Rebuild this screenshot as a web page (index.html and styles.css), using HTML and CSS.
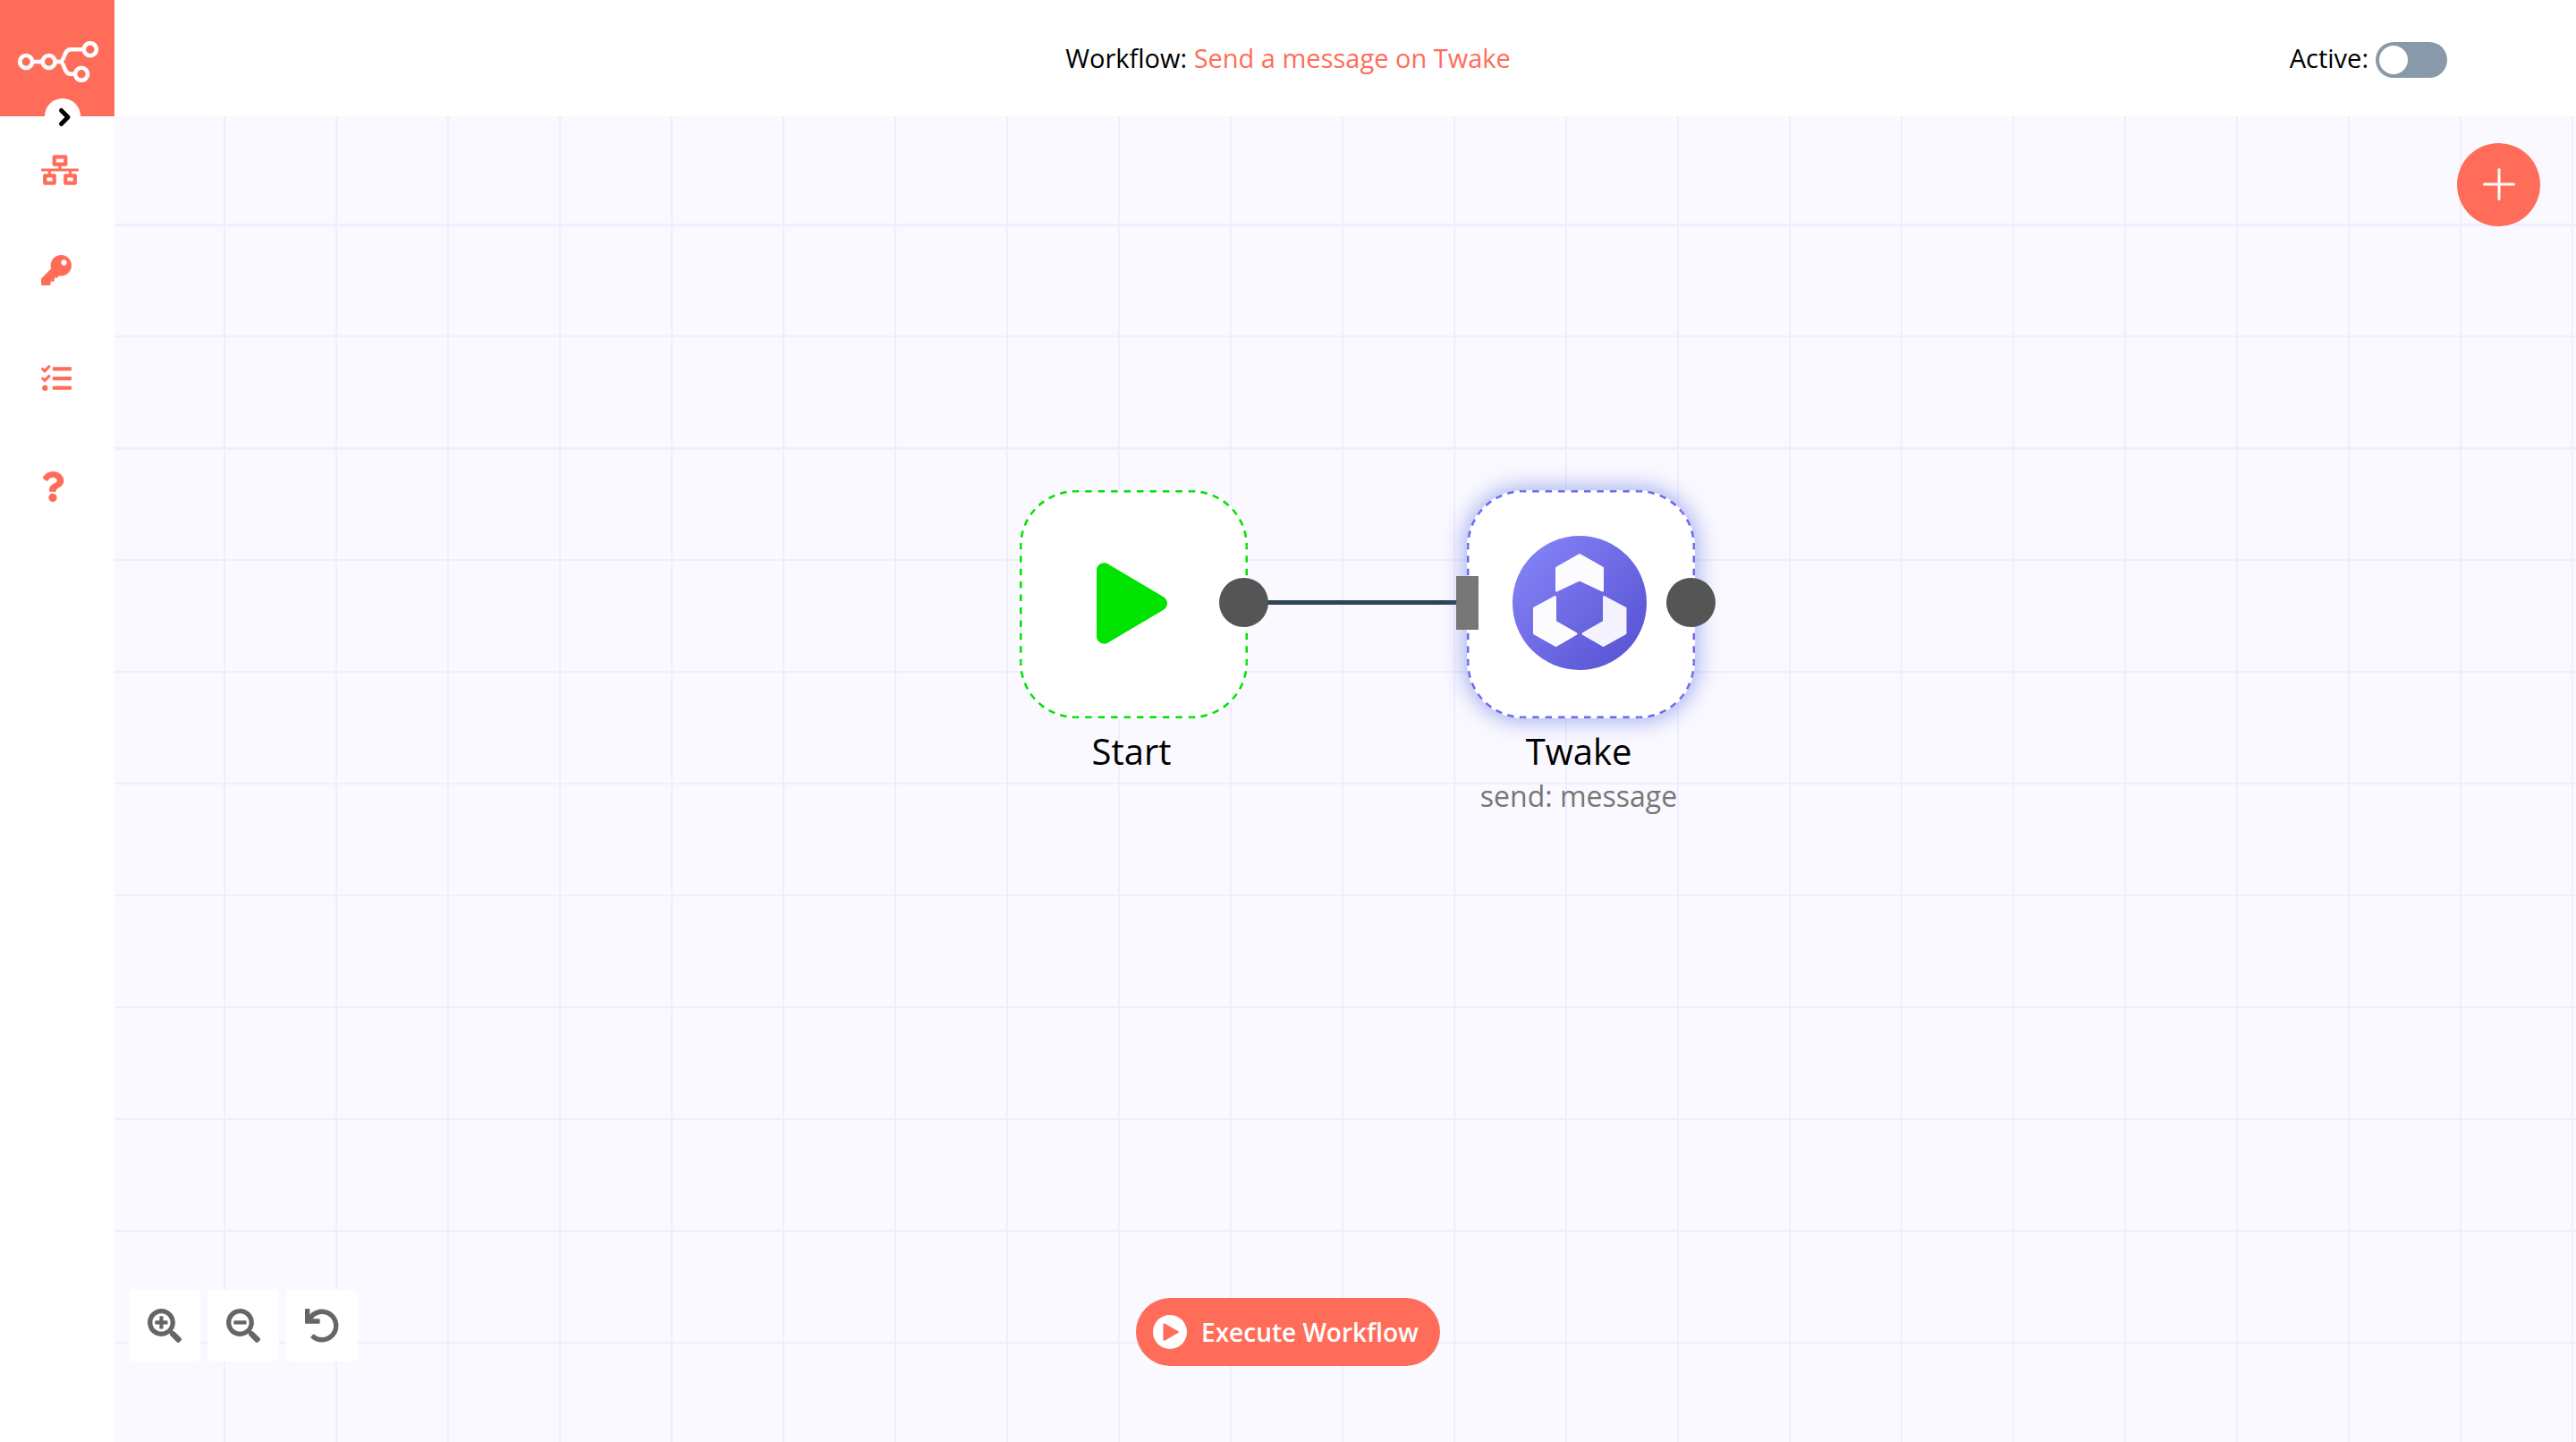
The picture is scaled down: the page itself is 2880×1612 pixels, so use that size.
FILE: index.html
```html
<!DOCTYPE html>
<html lang="en">
<head>
<meta charset="utf-8">
<title>Workflow: Send a message on Twake</title>
<link rel="stylesheet" href="styles.css">
</head>
<body>
<div class="app">
  <aside class="sidebar">
    <a class="logo" href="#" aria-label="Home">
      <svg width="90" height="46" viewBox="0 0 90 46" fill="none" stroke="#fff" stroke-width="4.6">
        <circle cx="9.2" cy="23" r="7"/>
        <circle cx="34.6" cy="23" r="7"/>
        <circle cx="80.8" cy="9.2" r="7"/>
        <circle cx="71" cy="36.8" r="7"/>
        <path d="M16.500 23h11M42 23h6M73.500 9.200H59c-8 0-6.500 13.800-12 13.800c5.500 0 4 13.800 12 13.800h5"/>
      </svg>
    </a>
    <button class="expand" aria-label="Expand menu">
      <svg width="20" height="24" viewBox="0 0 20 24" fill="none" stroke="#000" stroke-width="5" stroke-linecap="round" stroke-linejoin="round"><path d="M5.500 4.500l7.500 7.500l-7.500 7.500"/></svg>
    </button>
    <nav class="menu">
      <a class="menu-item menu-item-first" href="#" aria-label="Workflows"><svg width="42" height="34" viewBox="0 0 640 512"><path d="M640 264v-16c0-8.840-7.160-16-16-16H344v-40h72c17.670 0 32-14.330 32-32V32c0-17.670-14.330-32-32-32H224c-17.670 0-32 14.330-32 32v128c0 17.670 14.330 32 32 32h72v40H16c-8.840 0-16 7.160-16 16v16c0 8.840 7.160 16 16 16h104v40H64c-17.670 0-32 14.330-32 32v128c0 17.670 14.330 32 32 32h160c17.670 0 32-14.330 32-32V352c0-17.670-14.330-32-32-32h-56v-40h304v40h-56c-17.670 0-32 14.330-32 32v128c0 17.670 14.330 32 32 32h160c17.670 0 32-14.330 32-32V352c0-17.670-14.330-32-32-32h-56v-40h104c8.840 0 16-7.160 16-16zM256 128V64h128v64H256zm-64 320H96v-64h96v64zm352 0h-96v-64h96v64z"/></svg></a>
      <a class="menu-item" href="#" aria-label="Credentials"><svg width="34" height="34" viewBox="0 0 512 512"><path d="M512 176.001C512 273.203 433.202 352 336 352c-11.220 0-22.190-1.062-32.827-3.069l-24.012 27.014A23.999 23.999 0 0 1 261.223 384H224v40c0 13.255-10.745 24-24 24h-40v40c0 13.255-10.745 24-24 24H24c-13.255 0-24-10.745-24-24v-78.059c0-6.365 2.529-12.470 7.029-16.971l161.802-161.802C163.108 213.814 160 195.271 160 176 160 78.798 238.797.001 335.999 0 433.488-.001 512 78.511 512 176.001zM336 128c0 26.510 21.490 48 48 48s48-21.490 48-48-21.490-48-48-48-48 21.490-48 48z"/></svg></a>
      <a class="menu-item" href="#" aria-label="Executions"><svg width="34" height="34" viewBox="0 0 512 512"><path d="M139.610 35.500a12 12 0 0 0-17 0L58.930 98.810l-22.700-22.120a12 12 0 0 0-17 0L3.530 92.410a12 12 0 0 0 0 17l47.590 47.400a12.780 12.780 0 0 0 17.610 0l15.590-15.620L156.520 69a12.090 12.090 0 0 0 .09-17zm0 159.190a12 12 0 0 0-17 0l-63.680 63.720-22.700-22.100a12 12 0 0 0-17 0L3.530 252a12 12 0 0 0 0 17L51 316.500a12.770 12.770 0 0 0 17.600 0l15.700-15.690 72.200-72.220a12 12 0 0 0 .09-16.900zM64 368c-26.490 0-48.590 21.500-48.590 48S37.530 464 64 464a48 48 0 0 0 0-96zm432 16H208a16 16 0 0 0-16 16v32a16 16 0 0 0 16 16h288a16 16 0 0 0 16-16v-32a16 16 0 0 0-16-16zm0-320H208a16 16 0 0 0-16 16v32a16 16 0 0 0 16 16h288a16 16 0 0 0 16-16V80a16 16 0 0 0-16-16zm0 160H208a16 16 0 0 0-16 16v32a16 16 0 0 0 16 16h288a16 16 0 0 0 16-16v-32a16 16 0 0 0-16-16z"/></svg></a>
      <a class="menu-item" href="#" aria-label="Help"><svg width="26" height="34" viewBox="0 0 384 512"><path d="M202.021 0C122.202 0 70.503 32.703 29.914 91.026c-7.363 10.580-5.093 25.086 5.178 32.874l43.138 32.709c10.373 7.865 25.132 6.026 33.253-4.148 25.049-31.381 43.630-49.449 82.757-49.449 30.764 0 68.816 19.799 68.816 49.631 0 22.552-18.617 34.134-48.993 51.164-35.423 19.860-82.299 44.576-82.299 106.405V320c0 13.255 10.745 24 24 24h72.471c13.255 0 24-10.745 24-24v-5.773c0-42.860 125.268-44.645 125.268-160.627C377.504 66.256 286.902 0 202.021 0zM192 373.459c-38.196 0-69.271 31.075-69.271 69.271 0 38.195 31.075 69.270 69.271 69.270s69.271-31.075 69.271-69.271-31.075-69.270-69.271-69.270z"/></svg></a>
    </nav>
  </aside>

  <header class="topbar">
    <h1 class="title">Workflow: <a href="#">Send a message on Twake</a></h1>
    <div class="active">
      <label class="active-label" for="active">Active:</label>
      <input class="switch" id="active" type="checkbox" role="switch">
    </div>
  </header>

  <main class="canvas">
    <button class="add-node" aria-label="Add node">
      <svg width="38" height="38" viewBox="0 0 38 38" fill="none" stroke="#fff" stroke-width="3" stroke-linecap="round"><path d="M19 2.500v33M2.500 19h33"/></svg>
    </button>

    <div class="link"></div>

    <section class="node node-start">
      <div class="node-box">
        <svg class="outline" viewBox="0 0 255 255"><use href="#dashes-side"/><use href="#dashes-corner"/></svg>
        <svg width="79" height="91" viewBox="0 0 448 512"><path fill="#00e200" d="M424.400 214.700L72.400 6.600C43.800-10.300 0 6.100 0 47.900V464c0 37.500 40.700 60.100 72.400 41.300l352-208c31.400-18.500 31.500-64.100 0-82.600z"/></svg>
        <span class="port-out"></span>
      </div>
      <h2 class="node-name">Start</h2>
    </section>

    <section class="node node-twake">
      <div class="node-box selected">
        <svg class="outline" viewBox="0 0 255 255">
          <defs>
            <path id="dashes-side" stroke-dasharray="7.500 6.944" stroke-dashoffset="3.750" d="M62.500 1.250h130M62.500 253.750h130M1.250 62.500v130M253.750 62.500v130"/>
            <path id="dashes-corner" stroke-dasharray="7.500 6.244" stroke-dashoffset="3.750" d="M62.500 1.250A61.250 61.250 0 0 0 1.250 62.500M192.500 1.250A61.250 61.250 0 0 1 253.750 62.500M62.500 253.750A61.250 61.250 0 0 1 1.250 192.500M192.500 253.750A61.250 61.250 0 0 0 253.750 192.500"/>
          </defs>
          <use href="#dashes-side"/><use href="#dashes-corner"/>
        </svg>
        <svg width="150" height="150" viewBox="0 0 150 150">
          <defs><linearGradient id="twake" x1="0.100" y1="0.150" x2="0.850" y2="0.850"><stop offset="0" stop-color="#8280f5"/><stop offset="1" stop-color="#5b57d6"/></linearGradient></defs>
          <circle cx="75" cy="75" r="75" fill="url(#twake)"/>
          <g fill="#fcfcff" stroke="#fcfcff" stroke-width="3" stroke-linejoin="round">
            <path d="M75 21.500l25.500 14.500v25l-25.500 -12l-25.500 12v-25z"/>
            <path d="M47.500 68.500v27.500l23.500 13.500l-22.500 13l-24 -13.500v-28z"/>
            <path fill="#f3f2fd" stroke="#f3f2fd" d="M102.500 68.500v27.500l-23.500 13.500l22.500 13l24.500 -13.500v-28z"/>
          </g>
        </svg>
        <span class="port-in"></span>
        <span class="port-out"></span>
      </div>
      <h2 class="node-name">Twake</h2>
      <p class="node-info">send: message</p>
    </section>

    <div class="zoom-menu">
      <button class="zoom-button" aria-label="Zoom in"><svg width="38" height="38" viewBox="0 0 512 512"><path d="M304 192v32c0 6.600-5.400 12-12 12h-56v56c0 6.600-5.400 12-12 12h-32c-6.600 0-12-5.400-12-12v-56h-56c-6.600 0-12-5.400-12-12v-32c0-6.600 5.400-12 12-12h56v-56c0-6.600 5.400-12 12-12h32c6.600 0 12 5.400 12 12v56h56c6.600 0 12 5.400 12 12zm201 284.700L476.700 505c-9.400 9.400-24.600 9.400-33.900 0L343 405.300c-4.500-4.500-7-10.600-7-17V372c-35.300 27.600-79.700 44-128 44C93.100 416 0 322.900 0 208S93.100 0 208 0s208 93.100 208 208c0 48.300-16.400 92.700-44 128h16.300c6.400 0 12.500 2.500 17 7l99.700 99.700c9.300 9.400 9.300 24.600 0 34zM344 208c0-75.200-60.800-136-136-136S72 132.800 72 208s60.800 136 136 136 136-60.800 136-136z"/></svg></button>
      <button class="zoom-button" aria-label="Zoom out"><svg width="38" height="38" viewBox="0 0 512 512"><path d="M304 192v32c0 6.600-5.400 12-12 12H124c-6.600 0-12-5.400-12-12v-32c0-6.600 5.400-12 12-12h168c6.600 0 12 5.400 12 12zm201 284.700L476.700 505c-9.400 9.400-24.600 9.400-33.900 0L343 405.300c-4.500-4.500-7-10.600-7-17V372c-35.300 27.600-79.700 44-128 44C93.100 416 0 322.900 0 208S93.100 0 208 0s208 93.100 208 208c0 48.300-16.400 92.700-44 128h16.300c6.400 0 12.500 2.500 17 7l99.700 99.700c9.300 9.400 9.300 24.600 0 34zM344 208c0-75.200-60.800-136-136-136S72 132.800 72 208s60.800 136 136 136 136-60.800 136-136z"/></svg></button>
      <button class="zoom-button" aria-label="Reset zoom"><svg width="38" height="38" viewBox="0 0 512 512"><path d="M212.333 224.333H12c-6.627 0-12-5.373-12-12V12C0 5.373 5.373 0 12 0h48c6.627 0 12 5.373 12 12v78.112C117.773 39.279 184.260 7.470 258.175 8.007c136.906.994 246.448 111.623 246.157 248.532C504.041 393.258 393.120 504 256.333 504c-64.089 0-122.496-24.313-166.510-64.215-5.099-4.622-5.334-12.554-.467-17.420l33.967-33.967c4.474-4.474 11.662-4.717 16.401-.525C170.760 415.336 211.580 432 256.333 432c97.268 0 176-78.716 176-176 0-97.267-78.716-176-176-176-58.496 0-110.280 28.476-142.274 72.333h98.274c6.627 0 12 5.373 12 12v48c0 6.627-5.373 12-12 12z"/></svg></button>
    </div>
  </main>

  <div class="run-bar">
    <button class="run">
      <svg width="38" height="38" viewBox="0 0 38 38"><circle cx="19" cy="19" r="19" fill="#fff"/><path fill="#ff6d5a" stroke="#ff6d5a" stroke-width="2" stroke-linejoin="round" d="M12.500 10.300v17.500l15.500-8.800z"/></svg>
      <span>Execute Workflow</span>
    </button>
  </div>
</div>
</body>
</html>
```
FILE: styles.css
```css
* {
  box-sizing: border-box;
}

body {
  margin: 0;
  font-family: "Open Sans", "Noto Sans", sans-serif;
  font-size: 28px;
  color: #000;
}

button {
  margin: 0;
  padding: 0;
  border: 0;
  font: inherit;
  cursor: pointer;
}

svg {
  display: block;
}

h1,
h2,
p {
  margin: 0;
  font-weight: 400;
}

.app {
  position: relative;
  display: grid;
  grid-template-columns: 128px 1fr;
  grid-template-rows: 130px 1fr;
  min-height: 100vh;
}

/* Side menu */
.sidebar {
  position: relative;
  grid-row: 1 / 3;
  background: #fff;
}

.logo {
  display: flex;
  align-items: center;
  justify-content: center;
  height: 130px;
  padding: 8px 0 0 2px;
  background: #ff6d5a;
}

.expand {
  position: absolute;
  top: 110px;
  left: 50px;
  display: flex;
  align-items: center;
  justify-content: center;
  width: 40px;
  height: 40px;
  padding-left: 6px;
  padding-top: 2px;
  border-radius: 50%;
  background: #fff;
}

.menu {
  display: flex;
  flex-direction: column;
  padding-top: 8px;
}

.menu-item {
  display: flex;
  align-items: center;
  height: 121px;
  padding-left: 46px;
  fill: #ff6d5a;
}

.menu-item-first {
  height: 103px;
}

/* Top bar */
.topbar {
  display: grid;
  grid-template-columns: 1fr auto 1fr;
  align-items: center;
  padding: 4px 144px 0 16px;
  background: #fff;
}

.title,
.active-label {
  padding-bottom: 4px;
  font-size: 29px;
  line-height: 40px;
}

.title {
  grid-column: 2;
}

.title a {
  color: #ff6d5a;
  text-decoration: none;
}

.active {
  display: flex;
  align-items: center;
  justify-content: flex-end;
  gap: 8px;
}

.switch {
  appearance: none;
  display: flex;
  align-items: center;
  width: 80px;
  height: 40px;
  margin: 0;
  padding: 4px;
  border-radius: 20px;
  background: #8899aa;
}

.switch::before {
  content: "";
  width: 32px;
  height: 32px;
  border-radius: 50%;
  background: #fff;
}

.switch:checked {
  justify-content: flex-end;
  background: #ff6d5a;
}

/* Canvas */
.canvas {
  position: relative;
  background-color: #faf9ff;
  background-image:
    linear-gradient(#efedff, #efedff),
    linear-gradient(#efedff, #efedff),
    linear-gradient(to right, #efedff 2px, transparent 2px),
    linear-gradient(to bottom, #efedff 2px, transparent 2px);
  background-repeat: no-repeat, no-repeat, repeat, repeat;
  background-size: 100% 3px, 100% 3px, 125px 125px, 125px 125px;
  background-position: 0 120px, 0 370px, 122px 120px, 122px 120px;
}

.add-node {
  position: absolute;
  top: 30px;
  right: 40px;
  display: flex;
  align-items: center;
  justify-content: center;
  width: 93px;
  height: 93px;
  padding-bottom: 1px;
  border-radius: 50%;
  background: #ff6d5a;
}

.link {
  position: absolute;
  top: 541px;
  left: 1280px;
  width: 224px;
  height: 5px;
  background: #2f4354;
}

.node {
  position: absolute;
  top: 418px;
  width: 255px;
  text-align: center;
}

.node-start {
  left: 1012px;
}

.node-twake {
  left: 1512px;
}

.node-box {
  position: relative;
  display: flex;
  align-items: center;
  justify-content: center;
  height: 255px;
  padding: 0 4px 3px 0;
  border-radius: 63px;
  background: #fff;
}

.selected {
  box-shadow: 0 0 22px 5px rgba(100, 120, 225, 0.5);
}

.outline {
  position: absolute;
  inset: 0;
  fill: none;
  stroke: #00e200;
  stroke-width: 2.5px;
}

.selected .outline {
  stroke: #7268ee;
}

.port-out {
  position: absolute;
  top: 98px;
  right: -23px;
  width: 55px;
  height: 55px;
  border-radius: 50%;
  background: #555;
}

.port-in {
  position: absolute;
  top: 96px;
  left: -12px;
  width: 25px;
  height: 60px;
  background: #777;
}

.node-name {
  padding: 12px 5px 0 0;
  font-size: 40px;
  line-height: 50px;
}

.node-info {
  padding-right: 5px;
  font-size: 32px;
  line-height: 50px;
  color: #777;
}

.zoom-menu {
  position: absolute;
  left: 16px;
  bottom: 90px;
  display: flex;
  gap: 8px;
}

.zoom-button {
  display: flex;
  align-items: center;
  justify-content: center;
  width: 80px;
  height: 80px;
  border-radius: 5px;
  background: #fff;
  fill: #666;
}

.run-bar {
  position: absolute;
  right: 0;
  bottom: 85px;
  left: 0;
  display: flex;
  justify-content: center;
  pointer-events: none;
}

.run {
  display: flex;
  align-items: center;
  gap: 16px;
  height: 76px;
  padding: 0 24px 0 19px;
  border-radius: 38px;
  background: #ff6d5a;
  color: #fff;
  font-size: 28px;
  font-weight: 600;
  pointer-events: auto;
}
```
